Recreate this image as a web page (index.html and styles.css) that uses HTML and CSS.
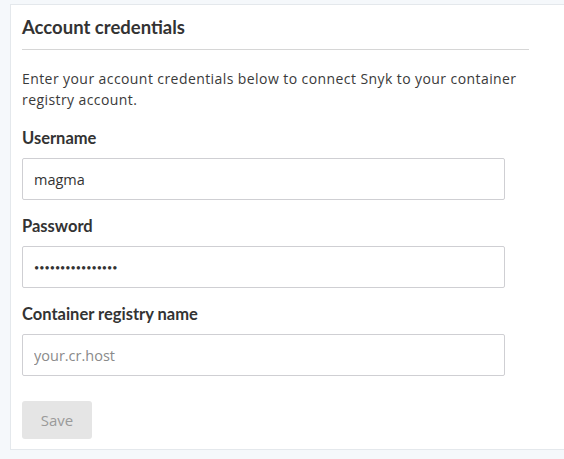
FILE: index.html
```html
<!DOCTYPE html>
<html lang="en">
<head>
<meta charset="utf-8">
<title>Account credentials</title>
<link rel="stylesheet" href="styles.css">
</head>
<body>
<div class="page">
  <section class="card">
    <div class="content">
      <h2 class="title">Account credentials</h2>
      <p class="intro">Enter your account credentials below to connect Snyk to your container registry account.</p>
      <form class="form">
        <div class="field">
          <label class="label" for="username">Username</label>
          <input class="input" id="username" type="text" value="magma">
        </div>
        <div class="field">
          <label class="label" for="password">Password</label>
          <input class="input input-password" id="password" type="password" value="abcdefghijklmnop">
        </div>
        <div class="field">
          <label class="label" for="registry">Container registry name</label>
          <input class="input" id="registry" type="text" placeholder="your.cr.host">
        </div>
        <button class="btn" type="button" disabled>Save</button>
      </form>
    </div>
  </section>
</div>
</body>
</html>
```

FILE: styles.css
```css
html, body {
  margin: 0;
  padding: 0;
  overflow: hidden;
}
body {
  background: #f5f8fb;
  font-family: "Open Sans", Lato, sans-serif;
  color: #3a3a3a;
}
.page {
  padding: 4px 0 0 10px;
}
.card {
  width: 600px;
  background: #fff;
  border: 1px solid #e4e8ec;
  padding: 10px 11px 10px 11px;
}
.content {
  width: 507px;
}
.title {
  margin: 0;
  font-family: Lato, "Open Sans", sans-serif;
  font-size: 18.5px;
  line-height: 24px;
  font-weight: 700;
  color: #333;
  padding-bottom: 10px;
  border-bottom: 1px solid #d6d6d6;
}
.intro {
  margin: 18px 0 18px 0;
  font-size: 14px;
  line-height: 21px;
  letter-spacing: 0.42px;
  width: 500px;
}
.form {
  display: flex;
  flex-direction: column;
  align-items: flex-start;
}
.field {
  display: flex;
  flex-direction: column;
  margin-bottom: 16px;
}
.label {
  font-family: Lato, "Open Sans", sans-serif;
  font-size: 16.5px;
  font-weight: 700;
  line-height: 20px;
  margin-bottom: 10px;
  color: #333;
}
.input {
  box-sizing: border-box;
  width: 483px;
  height: 42px;
  border: 1px solid #cfcfd3;
  border-radius: 2px;
  padding: 0 11px;
  font-family: "Open Sans", Lato, sans-serif;
  font-size: 14.5px;
  color: #333;
  background: #fff;
  outline: none;
}
.input-password {
  font-family: Lato, sans-serif;
  font-size: 9px;
  letter-spacing: 0;
}
.input::placeholder {
  color: #8a8a8a;
}
.btn {
  margin-top: 9px;
  width: 70px;
  height: 38px;
  border: none;
  border-radius: 3px;
  background: #e5e5e5;
  color: #9a9a9a;
  font-family: "Open Sans", Lato, sans-serif;
  font-size: 15px;
  padding: 0;
}
```
